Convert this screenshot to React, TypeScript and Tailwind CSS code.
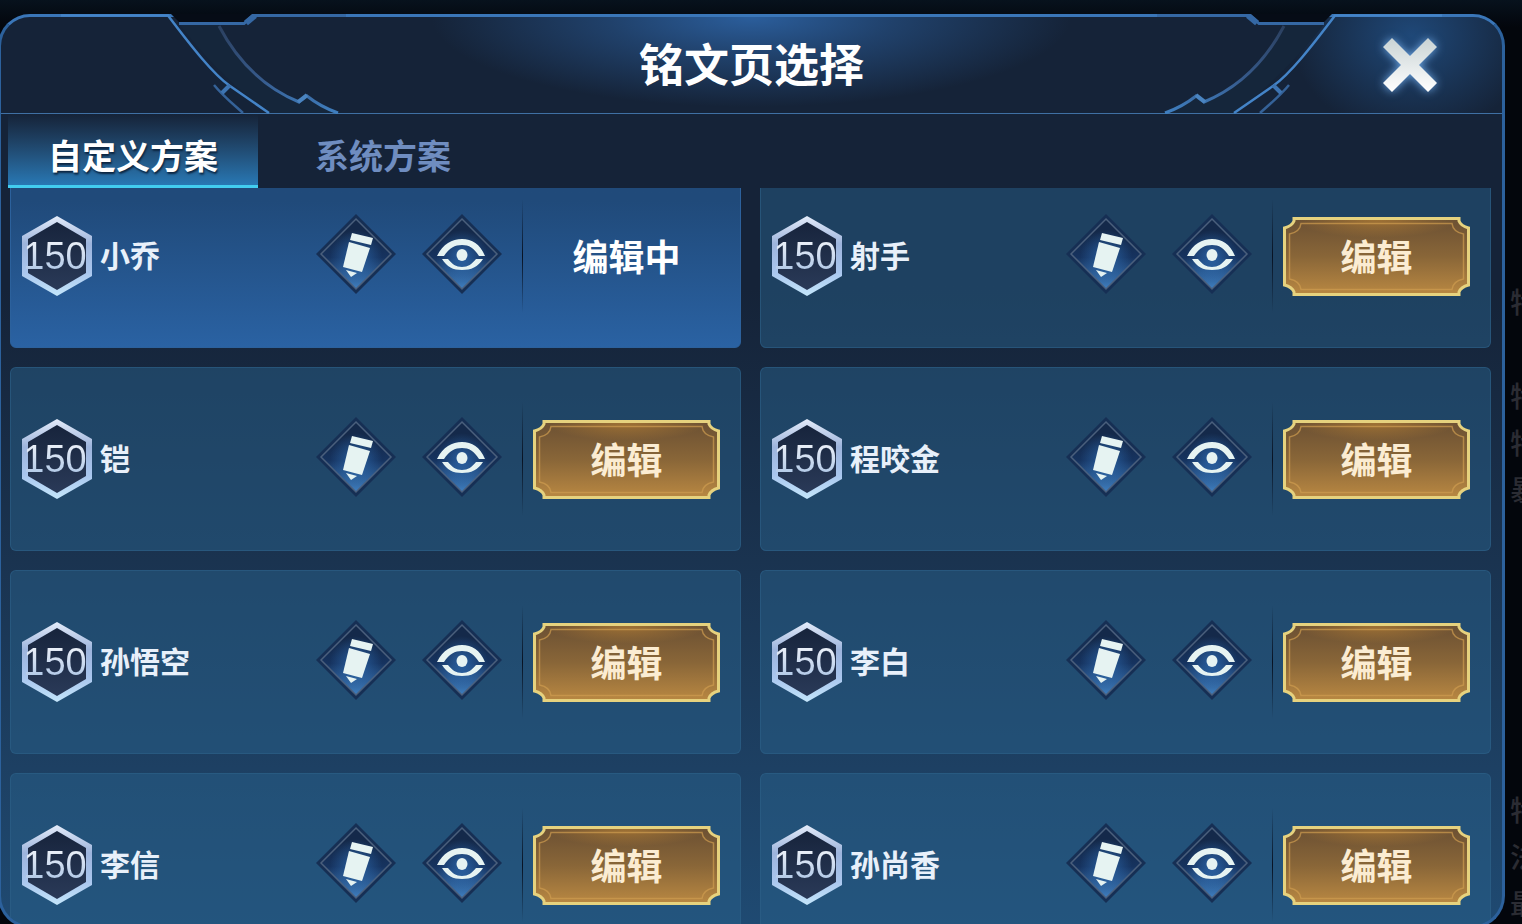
import { useState } from "react";

type Page = { id: number; name: string; level: number };

const pages: Page[] = [
  { id: 1, name: "小乔", level: 150 },
  { id: 2, name: "射手", level: 150 },
  { id: 3, name: "铠", level: 150 },
  { id: 4, name: "程咬金", level: 150 },
  { id: 5, name: "孙悟空", level: 150 },
  { id: 6, name: "李白", level: 150 },
  { id: 7, name: "李信", level: 150 },
  { id: 8, name: "孙尚香", level: 150 },
];

const tabs = ["自定义方案", "系统方案"];

// shared gradients, referenced by id from the icons below
const Defs = () => (
  <svg className="absolute size-0" aria-hidden="true">
    <defs>
      <linearGradient id="hexBorder" x1="0" y1="0" x2="0" y2="1">
        <stop offset="0" stopColor="#e4ecfa" />
        <stop offset="0.35" stopColor="#9db4dc" />
        <stop offset="0.7" stopColor="#a9c6ee" />
        <stop offset="1" stopColor="#c4e6fb" />
      </linearGradient>
      <linearGradient id="hexFill" x1="0" y1="0" x2="0" y2="1">
        <stop offset="0" stopColor="#17243c" />
        <stop offset="1" stopColor="#2a3a58" />
      </linearGradient>
      <linearGradient id="diamondFill" x1="0" y1="0" x2="0" y2="1">
        <stop offset="0.2" stopColor="#14294a" />
        <stop offset="0.55" stopColor="#16335f" />
        <stop offset="1" stopColor="#3f7fc0" />
      </linearGradient>
      <radialGradient id="iconGlow">
        <stop offset="0" stopColor="#3b8be0" stopOpacity="0.5" />
        <stop offset="1" stopColor="#3b8be0" stopOpacity="0" />
      </radialGradient>
      <linearGradient id="goldFill" x1="0" y1="0" x2="0" y2="1">
        <stop offset="0" stopColor="#6b5033" />
        <stop offset="0.5" stopColor="#896638" />
        <stop offset="1" stopColor="#b98842" />
      </linearGradient>
      <radialGradient id="goldShine" cx="0.5" cy="0" r="0.5">
        <stop offset="0" stopColor="#b07c34" stopOpacity="0.8" />
        <stop offset="1" stopColor="#b07c34" stopOpacity="0" />
      </radialGradient>
      <linearGradient id="closeFill" x1="0" y1="0" x2="0" y2="1">
        <stop offset="0" stopColor="#c9d3d4" />
        <stop offset="1" stopColor="#ffffff" />
      </linearGradient>
      <linearGradient id="innerLine" x1="0" y1="0" x2="0" y2="1">
        <stop offset="0" stopColor="#2b4060" />
        <stop offset="0.6" stopColor="#36598a" />
        <stop offset="1" stopColor="#3f7fc0" />
      </linearGradient>
    </defs>
  </svg>
);

const HeaderOrnament = ({ className }: { className: string }) => (
  <svg className={className} width="345" height="100" viewBox="0 0 345 100" fill="none" aria-hidden="true">
    <path d="M170 0H253L244 9H179Z" fill="#060c16" />
    <path d="M178 10H218C240 52 270 80 298 89L306 82L337 99H268C236 76 204 44 178 10Z" fill="#15263b" />
    <path d="M60 1.500H167C190 32 212 60 229 72C245 83 258 92 268 99" stroke="#4484c8" strokeWidth="2.500" />
    <path d="M178 9.500H243L252 1.500H345" stroke="#3568a4" strokeWidth="3" />
    <path d="M245 9L254 1.500" stroke="#3568a4" strokeWidth="6" />
    <path d="M218 12C238 50 264 74 298 88L306 82C316 90 326 95 337 99" stroke="url(#innerLine)" strokeWidth="3" />
    <path d="M297 88L306 81" stroke="#4a84c0" strokeWidth="4" />
    <path d="M213 71C222 82 232 90 242 99" stroke="#356298" strokeWidth="2.500" />
    <path d="M229 71L221 79" stroke="#3d74b2" strokeWidth="4" />
  </svg>
);

const LevelBadge = ({ level }: { level: number }) => (
  <div className="relative flex h-20 w-[70px] shrink-0 items-center justify-center pr-1">
    <svg className="absolute inset-0" width="70" height="80" viewBox="0 0 70 80" aria-hidden="true">
      <path d="M35 0L70 20V60L35 80L0 60V20Z" fill="url(#hexBorder)" />
      <path d="M35 6L64 23V57L35 74L6 57V23Z" fill="url(#hexFill)" />
    </svg>
    <span className="relative bg-gradient-to-b from-[#f4f6fb] to-[#a9c3e4] bg-clip-text font-['Liberation_Sans',sans-serif] text-[38px] leading-none text-transparent">
      {level}
    </span>
  </div>
);

const DiamondButton = ({ label, children }: { label: string; children: React.ReactNode }) => (
  <button type="button" aria-label={label} className="size-20 shrink-0 cursor-pointer">
    <svg width="80" height="80" viewBox="0 0 80 80" aria-hidden="true">
      <path d="M40 0L80 40L40 80L0 40Z" fill="#162f54" />
      <path d="M40 5L75 40L40 75L5 40Z" fill="url(#diamondFill)" stroke="#4a5f7c" strokeWidth="1.500" />
      <circle cx="40" cy="42" r="26" fill="url(#iconGlow)" />
      {children}
    </svg>
  </button>
);

const PencilIcon = () => (
  <g fill="#e6f3f2">
    <path d="M36 19L57 24L55 31L34 26Z" />
    <path d="M33 28L54 34L46 58L27 53Z" />
    <path d="M30 56L41 59L35 63Z" />
  </g>
);

const EyeIcon = () => (
  <g fill="#e6f3f2">
    <path d="M15 42C21 30 30 25 40 25C50 25 58 30 63 42H57C52 34 47 31 40 31C33 31 27 34 22 42Z" />
    <path d="M20 45H26C30 50 34 53 40 53C46 53 50 50 54 45H61C56 53 49 56 40 56C31 56 25 53 20 45Z" />
    <ellipse cx="40" cy="41" rx="5.500" ry="6" />
  </g>
);

const EditButton = ({ onClick }: { onClick: () => void }) => (
  <button
    type="button"
    onClick={onClick}
    className="relative flex h-[79px] flex-1 cursor-pointer items-center justify-center pb-0.5 text-4xl font-bold text-[#fbecd2]"
  >
    <svg className="absolute inset-0 size-full" viewBox="0 0 187 79" preserveAspectRatio="none" fill="none" aria-hidden="true">
      <path
        d="M11 1.500H176V4Q178 9 185.500 11V68Q178 70 176 75V77.500H11V75Q9 70 1.500 68V11Q9 9 11 4Z"
        fill="url(#goldFill)"
      />
      <path d="M11 1.500H176V40H11Z" fill="url(#goldShine)" />
      <path
        d="M11 1.500H176V4Q178 9 185.500 11V68Q178 70 176 75V77.500H11V75Q9 70 1.500 68V11Q9 9 11 4Z"
        stroke="#e6d27e"
        strokeWidth="3"
      />
      <path
        d="M18 6.500H169Q170 15 180.500 17V62Q170 64 169 72.500H18Q17 64 6.500 62V17Q17 15 18 6.500Z"
        stroke="#cf9c50"
        strokeOpacity="0.7"
        strokeWidth="1.500"
      />
    </svg>
    <span className="relative">编辑</span>
  </button>
);

const PageCard = ({ page, active, onEdit }: { page: Page; active: boolean; onEdit: () => void }) => (
  <li
    className={`flex h-[184px] items-center rounded-md border pl-[11px] ${
      active
        ? "border-[#2c619c] bg-gradient-to-b from-[#204a7a] from-20% to-[#2a62a3]"
        : "border-[#2d6088]/60 bg-[#285f8a]/50"
    }`}
  >
    <LevelBadge level={page.level} />
    <h2 className="flex-1 pb-1 pl-2 text-3xl font-bold text-[#e8f0fa]">{page.name}</h2>
    <div className="flex gap-[26px] pr-5 pb-1">
      <DiamondButton label={`重命名 ${page.name}`}>
        <PencilIcon />
      </DiamondButton>
      <DiamondButton label={`预览 ${page.name}`}>
        <EyeIcon />
      </DiamondButton>
    </div>
    <div className="h-[114px] w-px bg-gradient-to-b from-transparent via-[#081222] to-transparent" />
    <div className="flex w-[217px] justify-center pr-5 pl-[10px]">
      {active ? (
        <span className="pb-0.5 text-4xl font-bold text-white">编辑中</span>
      ) : (
        <EditButton onClick={onEdit} />
      )}
    </div>
  </li>
);

const App = () => {
  const [tab, setTab] = useState(0);
  const [editing, setEditing] = useState(1);

  return (
    <div className="flex h-screen overflow-hidden bg-gradient-to-b from-[#07121d] to-[#03060c] to-3% pt-[14px] font-['Noto_Sans_CJK_SC',sans-serif]">
      <Defs />
      <section className="-mb-1 -ml-0.5 flex min-w-0 flex-1 flex-col rounded-[32px] border-[3px] border-[#2c619c] border-t-[#3a76b8] bg-gradient-to-b from-[#152338] from-30% to-[#1f4a72]">
        <header className="relative grid h-[97px] grid-cols-[1fr_auto_1fr] items-center rounded-t-[29px] border-b border-[#3f70a4] bg-[radial-gradient(ellipse_320px_90px_at_50%_0,#2b5e9c,#2b5e9c80_45%,transparent),radial-gradient(ellipse_120px_100px_at_94%_20%,#1f4878,transparent)]">
          <HeaderOrnament className="absolute -top-[3px] left-0" />
          <HeaderOrnament className="absolute -top-[3px] right-0 -scale-x-100" />
          <h1 className="col-start-2 pb-1.5 text-[45px] leading-none font-bold text-white">铭文页选择</h1>
          <button type="button" aria-label="关闭" className="relative mr-[62px] cursor-pointer justify-self-end">
            <svg className="drop-shadow-[0_0_5px_#6fa8e6]" width="60" height="60" viewBox="0 0 60 60" aria-hidden="true">
              <path
                d="M12 3L30 21L48 3L57 12L39 30L57 48L48 57L30 39L12 57L3 48L21 30L3 12Z"
                fill="url(#closeFill)"
              />
            </svg>
          </button>
        </header>

        <nav className="flex h-[74px] shrink-0 pl-[7px]">
          {tabs.map((name, i) => (
            <button
              key={name}
              type="button"
              onClick={() => setTab(i)}
              className={`w-[250px] cursor-pointer border-b-[3px] pt-2.5 text-[34px] leading-none font-bold ${
                tab === i
                  ? "border-[#42cdf0] bg-gradient-to-b from-[#152338] to-[#2878b4] text-white [text-shadow:1px_2px_2px_#0b2540]"
                  : "border-transparent text-[#6f8dc0]"
              }`}
            >
              {name}
            </button>
          ))}
        </nav>

        <div className="min-h-0 flex-1 overflow-hidden rounded-b-[29px] pr-[11px] pl-[9px]">
          <ul className="-mt-6 grid grid-cols-2 gap-[19px]">
            {pages.map((page) => (
              <PageCard
                key={page.id}
                page={page}
                active={editing === page.id}
                onEdit={() => setEditing(page.id)}
              />
            ))}
          </ul>
        </div>
      </section>

      {/* dimmed stats list behind the dialog */}
      <aside className="flex w-[17px] shrink-0 flex-col overflow-hidden pt-[264px] pl-[5px] text-[28px] leading-[47px] font-medium whitespace-nowrap text-[#2b2c33]">
        <p>特</p>
        <div className="pt-[47px]">
          <p>特</p>
          <p>特</p>
          <p>暴</p>
        </div>
        <div className="pt-[273px]">
          <p>特</p>
          <p>法</p>
          <p>最</p>
        </div>
      </aside>
    </div>
  );
};

export default App;
